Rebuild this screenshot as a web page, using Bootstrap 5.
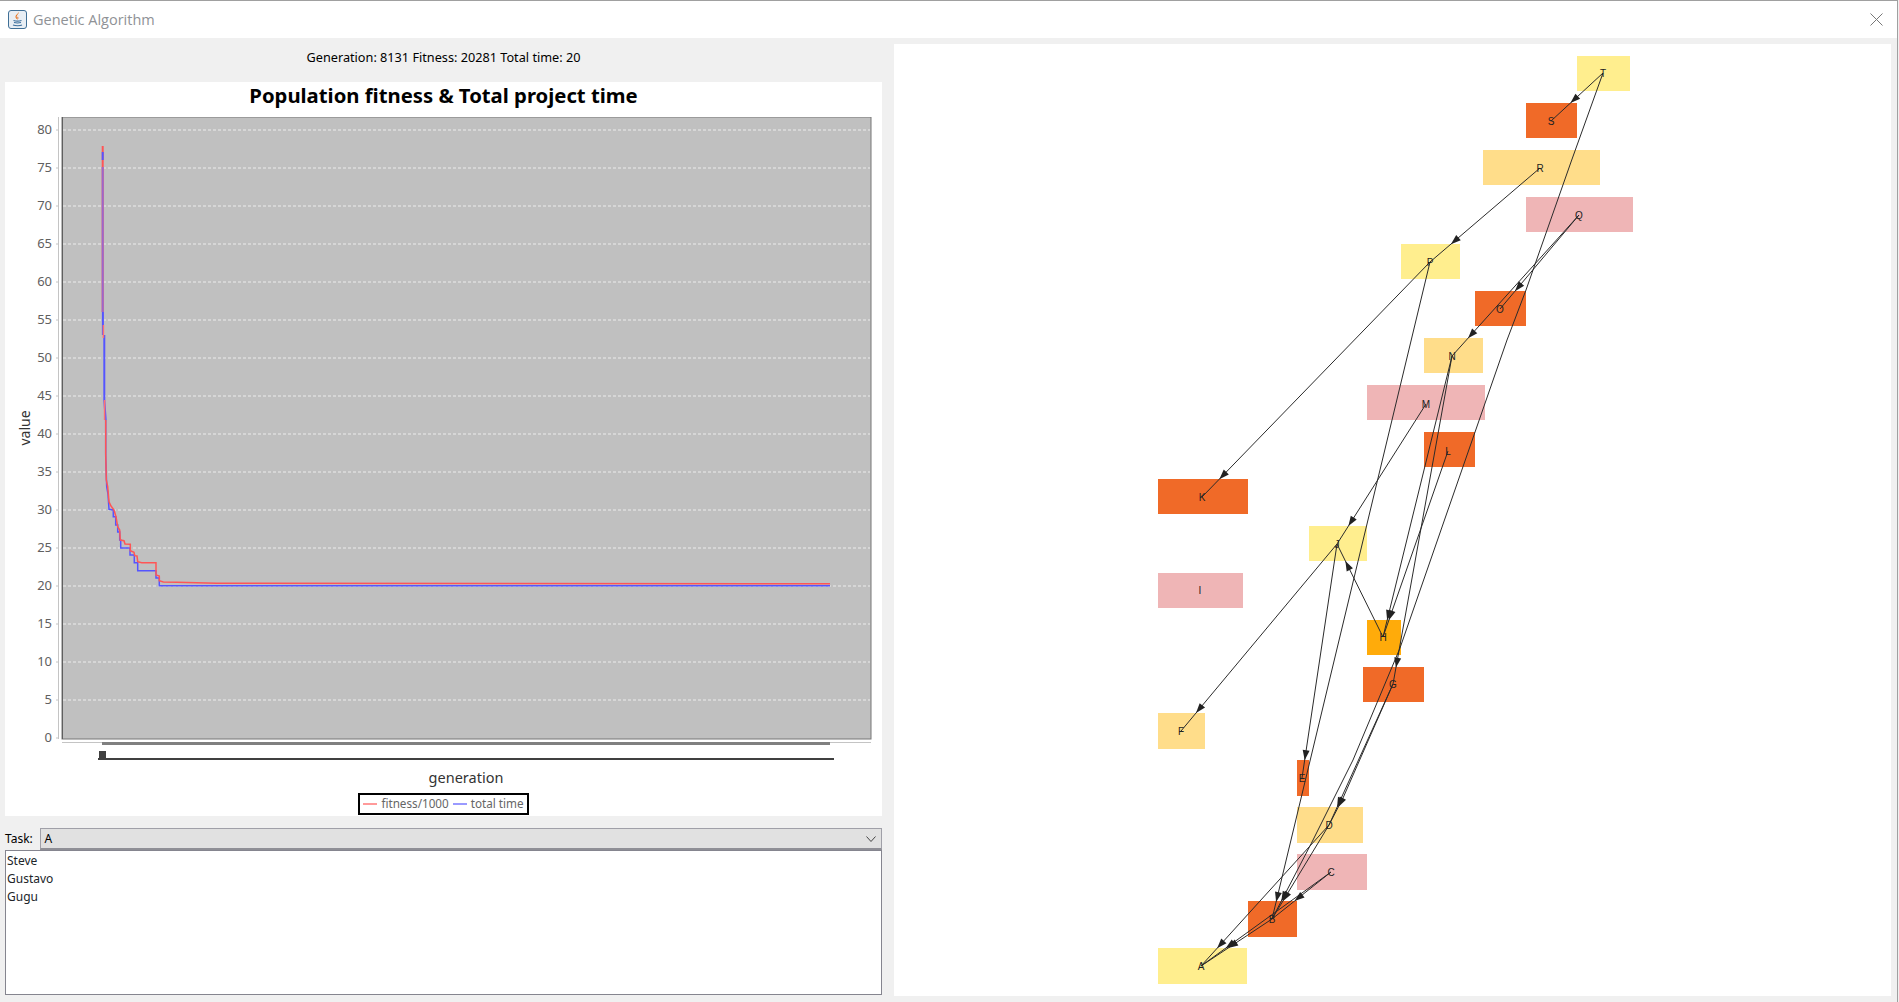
<!DOCTYPE html>
<html lang="en">
<head>
    <meta charset="UTF-8">
    <title>Genetic Algorithm</title>
    <link href="https://cdn.jsdelivr.net/npm/bootstrap@5.3.0/dist/css/bootstrap.min.css" rel="stylesheet">
    <style>
        html, body { height: 100%; overflow: hidden; }
        body { background: #f0f0f0; font-family: "Noto Sans", "DejaVu Sans", sans-serif; color: #000; }
        .app-window { height: 1002px; width: 1898px; border-top: 1px solid #a0a0a0; border-right: 1px solid #a0a0a0; }
        .title-strip { height: 37px; padding-left: 8px; padding-right: 14px; gap: 6px; font-family: "Open Sans", "Liberation Sans", sans-serif; font-size: 14.5px; color: #8f9296; }
        .left-side { width: 877px; margin-left: 5px; }
        .right-side { width: 997px; height: 952px; margin-left: 12px; margin-top: 6px; }
        .status-line { height: 44px; padding-bottom: 4px; font-size: 12.7px; }
        .chart-panel { height: 734px; }
        .chart-title { height: 35px; font-size: 20.3px; font-weight: 700; line-height: 26px; }
        .axis-name { height: 27px; line-height: 23px; font-size: 14.5px; color: #333; padding-left: 45px; }
        .legend-box { height: 22px; border: 2px solid #000; padding: 0 3px; font-size: 11.7px; color: #666; gap: 4px; }
        .legend-dash { width: 14px; height: 2px; }
        .dash-red { background: #ff9a9a; }
        .dash-blue { background: #9a9aff; }
        .task-row { margin-top: 12px; height: 22px; font-size: 12px; }
        .task-row label { width: 37px; line-height: 20px; }
        .task-select.form-select { height: 22px; min-height: 0; padding: 0 20px 0 3px; font-size: 12px; line-height: 18px; color: #000; background-color: #e1e1e1; border: 1px solid #a0a0a8; border-bottom: 2px solid #8f8f96; border-radius: 0; background-size: 12px 8px; background-position: right 4px center; box-shadow: none;
            --bs-form-select-bg-img: url("data:image/svg+xml,%3csvg xmlns='http://www.w3.org/2000/svg' viewBox='0 0 12 8'%3e%3cpath fill='none' stroke='%23444' d='M1.5 1.5 6 6.5l4.5-5'/%3e%3c/svg%3e"); }
        .people-list.list-group { height: 145px; border: 1px solid #85858f; border-radius: 0; padding-top: 1px; font-size: 12px; }
        .people-list .list-group-item { padding: 0 0 0 1px; border: 0; border-radius: 0; height: 18px; line-height: 18px; background: none; }
        svg text { font-family: "Liberation Sans", sans-serif; }
        .tick-text { font-family: "Noto Sans", sans-serif !important; font-size: 13px; fill: #606060; }
        .node-text { font-size: 10px; fill: #222; }
    </style>
</head>
<body>
    <div class="app-window d-flex flex-column">
        <!-- Title bar -->
        <div class="title-strip bg-white d-flex align-items-center">
            <svg width="19" height="19" viewBox="0 0 19 19">
                <rect x="0.5" y="0.5" width="18" height="18" rx="2.5" fill="#e8eef4" stroke="#3f6f96"/>
                <path d="M10.5 2c1 2-3 3.5-1.5 6 .5 1 1 1.200 1 1.800-1-.4-3-1.800-2.500-3.600C8 4.500 10 4 10.500 2z" fill="#e8761f"/>
                <path d="M11.500 5c-1.500 1-2 1.500-1 3l-.5 1c-1.500-2 .5-3 1.500-4z" fill="#d9571a"/>
                <path d="M5.500 10.500c2 .6 6 .6 8 0M6 12.500c2 .5 5 .5 7 0M5 15c2.500 1 7 1 9 0" fill="none" stroke="#3c6f9c" stroke-width="1.100"/>
            </svg>
            <span class="flex-grow-1">Genetic Algorithm</span>
            <svg width="13" height="13" viewBox="0 0 13 13"><path d="M.5.5l12 12M12.500.5l-12 12" stroke="#777" fill="none"/></svg>
        </div>

        <div class="d-flex flex-grow-1">
            <!-- Left side -->
            <div class="left-side d-flex flex-column">
                <div class="status-line d-flex align-items-center justify-content-center">Generation: 8131 Fitness: 20281 Total time: 20</div>

                <div class="chart-panel bg-white d-flex flex-column align-items-stretch">
                    <div class="chart-title text-center">Population fitness &amp; Total project time</div>
                    <svg id="plotSvg" width="877" height="649" viewBox="5 117 877 649"></svg>
                    <div class="axis-name text-center">generation</div>
                    <div class="d-flex justify-content-center">
                        <div class="legend-box d-inline-flex align-items-center">
                            <span class="legend-dash dash-red"></span><span>fitness/1000</span>
                            <span class="legend-dash dash-blue"></span><span>total time</span>
                        </div>
                    </div>
                </div>

                <div class="task-row d-flex align-items-center">
                    <label for="taskSelect">Task:</label>
                    <select id="taskSelect" class="task-select form-select flex-grow-1"><option>A</option></select>
                </div>
                <ul class="people-list list-group bg-white">
                    <li class="list-group-item">Steve</li>
                    <li class="list-group-item">Gustavo</li>
                    <li class="list-group-item">Gugu</li>
                </ul>
            </div>

            <!-- Right side: task graph -->
            <div class="right-side bg-white">
                <svg id="graphSvg" width="997" height="952" viewBox="894 44 997 952"></svg>
            </div>
        </div>
    </div>

    <script src="https://cdn.jsdelivr.net/npm/bootstrap@5.3.0/dist/js/bootstrap.bundle.min.js"></script>
    <script>
        // Fitness chart
        const yOf = v => 738 - 7.6 * v;
        let plot = '<rect x="62" y="117" width="809" height="622" fill="#c0c0c0" stroke="#777"/>';
        plot += '<path d="M62.500 117V739" stroke="#5f5f5f"/>';
        plot += '<path d="M58.500 117V739" stroke="#c4c4c4"/>';
        for (let v = 0; v <= 80; v += 5) {
            if (v > 0) plot += `<path d="M63 ${yOf(v)}H870" stroke="#ececec" stroke-dasharray="3 2"/>`;
            plot += `<path d="M56 ${yOf(v)}H58" stroke="#c4c4c4"/>`;
            plot += `<text class="tick-text" x="52" y="${yOf(v) + 4}" text-anchor="end">${v}</text>`;
        }
        plot += '<text class="tick-text" transform="translate(30 428) rotate(-90)" text-anchor="middle" style="font-size:14px;fill:#333">value</text>';

        // step curves, read off the reference in zoomed coords (origin 40,420, 3x)
        const toFull = pts => pts.map(p => (40 + p[0] / 3).toFixed(1) + ',' + (420 + p[1] / 3).toFixed(1)).join(' ');
        const red = [[197,0],[197,100],[199,180],[203,200],[207,245],[213,258],[222,270],[228,290],[233,320],[239,330],[241,360],[252,362],[255,372],[271,373],[271,392],[282,397],[284,407],[291,408],[293,425],[305,428],[348,428],[348,465],[358,468],[358,482],[370,486],[410,487],[530,490],[2370,491]];
        const blue = [[197,0],[197,108],[200,200],[204,222],[207,268],[220,270],[220,290],[227,290],[227,315],[233,315],[233,336],[239,336],[239,360],[242,360],[242,384],[270,384],[270,405],[283,405],[283,428],[293,428],[293,452],[348,452],[348,474],[358,474],[358,497],[2370,497]];
        // steep start of the run: red peeks out over the shared purple stretch
        plot += '<path d="M102.700 146V312" stroke="#ff5555" stroke-width="2" fill="none"/>';
        plot += '<path d="M102.700 152V160" stroke="#5555ff" stroke-width="2" fill="none"/>';
        plot += '<path d="M102.700 167V312" stroke="#9b66cc" stroke-width="2" fill="none"/>';
        plot += '<path d="M102.900 312V335M104.300 335V400L105.700 420" stroke="#5555ff" stroke-width="2" fill="none"/>';
        plot += '<path d="M103.400 325V338M104.600 400V420" stroke="#ff7070" stroke-width="1.500" fill="none"/>';
        plot += `<polyline points="${toFull(blue)}" fill="none" stroke="#5555ff" stroke-width="1.500"/>`;
        plot += `<polyline points="${toFull(red)}" fill="none" stroke="#ff5555" stroke-width="1.500"/>`;

        // range slider under the plot
        plot += '<path d="M62 742.500H871" stroke="#c4c4c4"/>';
        plot += '<rect x="102" y="742" width="728" height="3" fill="#808080"/>';
        plot += '<rect x="98" y="758" width="736" height="2" fill="#404040"/>';
        plot += '<rect x="99" y="751" width="7" height="8" fill="#404040"/>';
        document.getElementById('plotSvg').innerHTML = plot;

        // Task graph
        const ORANGE = '#f06a28', YELLOW = '#ffee8e', SAND = '#ffdd8a', PINK = '#efb5b6', AMBER = '#ffab0a';
        const nodes = {
            T: [1577, 56, 1630, 91, YELLOW, 1603, 73],
            S: [1526, 103, 1577, 138, ORANGE, 1551, 121],
            R: [1483, 150, 1600, 185, SAND, 1540, 168],
            Q: [1526, 197, 1633, 232, PINK, 1579, 215],
            P: [1401, 244, 1460, 279, YELLOW, 1430, 262],
            O: [1475, 291, 1526, 326, ORANGE, 1500, 309],
            N: [1424, 338, 1483, 373, SAND, 1452, 356],
            M: [1367, 385, 1485, 420, PINK, 1426, 404],
            L: [1424, 432, 1475, 467, ORANGE, 1448, 451],
            K: [1158, 479, 1248, 514, ORANGE, 1202, 497],
            J: [1309, 526, 1367, 561, YELLOW, 1337, 544],
            I: [1158, 573, 1243, 608, PINK, 1200, 590],
            H: [1367, 620, 1401, 655, AMBER, 1383, 637],
            G: [1363, 667, 1424, 702, ORANGE, 1393, 684],
            F: [1158, 713, 1205, 749, SAND, 1181, 731],
            E: [1297, 760, 1309, 796, ORANGE, 1302, 778],
            D: [1297, 807, 1363, 843, SAND, 1329, 825],
            C: [1297, 854, 1367, 890, PINK, 1331, 872],
            B: [1248, 901, 1297, 937, ORANGE, 1272, 919],
            A: [1158, 948, 1247, 984, YELLOW, 1201, 966]
        };
        // from, to, optional bend points
        const edges = [
            ['T', 'S'], ['R', 'P'], ['P', 'K'], ['Q', 'O'], ['Q', 'N'], ['M', 'J'], ['H', 'J'],
            ['J', 'F'], ['J', 'E'], ['N', 'H'], ['L', 'H'], ['N', 'G'], ['P', 'B'], ['G', 'D'],
            ['G', 'D', [[1343, 798]]], ['D', 'B'], ['D', 'A'], ['C', 'A'], ['C', 'B'], ['B', 'A'],
            ['T', 'B', [[1571, 162], [1526, 290], [1507, 340], [1400, 648], [1353, 760], [1312, 842]]]
        ];

        // point where the segment a->b enters the target box
        function entryPoint(a, b, n) {
            let best = null;
            for (let t = 0; t <= 1; t += 0.002) {
                const x = a[0] + (b[0] - a[0]) * t, y = a[1] + (b[1] - a[1]) * t;
                if (x >= n[0] && x <= n[2] && y >= n[1] && y <= n[3]) { best = [x, y]; break; }
            }
            return best || b;
        }

        let graph = '';
        for (const k in nodes) {
            const n = nodes[k];
            graph += `<rect x="${n[0]}" y="${n[1]}" width="${n[2] - n[0]}" height="${n[3] - n[1]}" fill="${n[4]}"/>`;
        }
        let heads = '';
        edges.forEach(e => {
            const a = nodes[e[0]], b = nodes[e[1]];
            const pts = [[a[5], a[6]]].concat(e[2] || [], [[b[5], b[6]]]);
            graph += `<polyline points="${pts.map(p => p.join(',')).join(' ')}" fill="none" stroke="#2b2b2b" stroke-width="1"/>`;
            const from = pts[pts.length - 2], to = pts[pts.length - 1];
            const tip = entryPoint(from, to, b);
            const ang = Math.atan2(to[1] - from[1], to[0] - from[0]) * 180 / Math.PI;
            heads += `<path transform="translate(${tip[0]} ${tip[1]}) rotate(${ang})" d="M0 0L-10 -3.500L-10 3.500Z" fill="#222"/>`;
        });
        graph += heads;
        for (const k in nodes) {
            const n = nodes[k];
            graph += `<text class="node-text" x="${n[5]}" y="${n[6] + 3.500}" text-anchor="middle">${k}</text>`;
        }
        document.getElementById('graphSvg').innerHTML = graph;
    </script>
</body>
</html>
